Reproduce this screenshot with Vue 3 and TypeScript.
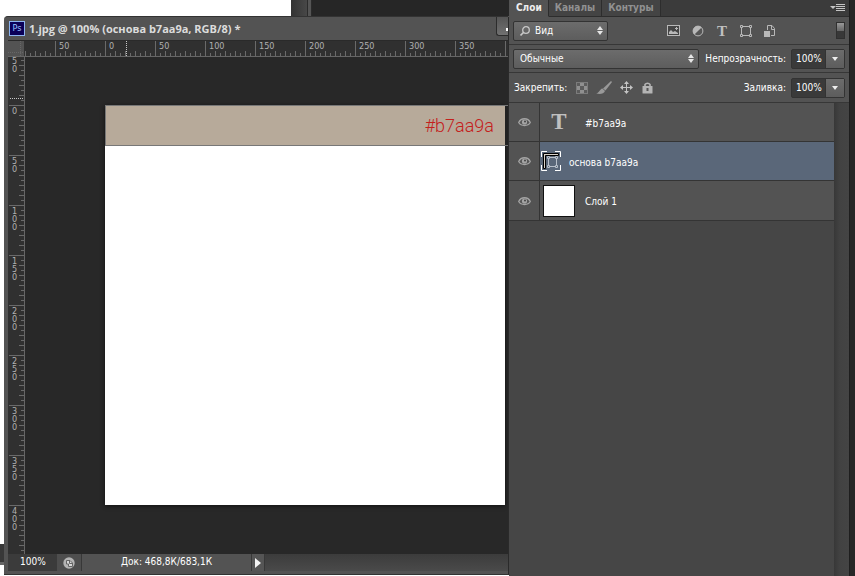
<script setup lang="ts">
import { computed, onBeforeUnmount, onMounted, ref } from 'vue'

type LayerKind = 'text' | 'shape' | 'pixel'
interface Layer {
  id: number
  name: string
  kind: LayerKind
}

const layers: Layer[] = [
  { id: 1, name: '#b7aa9a', kind: 'text' },
  { id: 2, name: 'основа b7aa9a', kind: 'shape' },
  { id: 3, name: 'Слой 1', kind: 'pixel' },
]
const tabs = ['Слои', 'Каналы', 'Контуры']

const activeTab = ref('Слои')
const selected = ref(2)
const filterKind = ref('Вид')
const blendMode = ref('Обычные')
const opacity = ref('100%')
const fill = ref('100%')

// Ruler geometry: one tick every 5px, a label every 50px
const ORIGIN_X = 97
const ORIGIN_Y = 49
const body = ref<HTMLElement | null>(null)
const width = ref(0)
const height = ref(0)
let observer: ResizeObserver | undefined

function measure(): void {
  width.value = body.value?.clientWidth ?? 0
  height.value = body.value?.clientHeight ?? 0
}
onMounted(() => {
  measure()
  observer = new ResizeObserver(measure)
  if (body.value) observer.observe(body.value)
})
onBeforeUnmount(() => observer?.disconnect())

function steps(from: number, to: number): number[] {
  return Array.from({ length: Math.max(0, to - from + 1) }, (_, i) => from + i)
}

const ticksX = computed(() =>
  steps(-16, Math.floor((width.value - ORIGIN_X) / 5)).map((n) => ({ pos: ORIGIN_X + n * 5, n })),
)
const ticksY = computed(() =>
  steps(-9, Math.floor((height.value - 16 - ORIGIN_Y) / 5)).map((n) => ({ pos: ORIGIN_Y + n * 5, n })),
)
const labelsX = computed(() =>
  steps(-1, Math.floor((width.value - ORIGIN_X - 22) / 50)).map((n) => ({
    pos: ORIGIN_X + n * 50,
    text: String(Math.abs(n * 50)),
  })),
)
const labelsY = computed(() =>
  steps(-1, Math.floor((height.value - 16 - ORIGIN_Y - 26) / 50)).map((n) => ({
    pos: ORIGIN_Y + n * 50,
    digits: String(Math.abs(n * 50)).split(''),
  })),
)

function tickLength(n: number): number {
  if (n % 10 === 0) return 15
  return n % 2 === 0 ? 5 : 3
}
</script>

<template>
  <div class="desktop">
    <section class="workspace">
      <div class="backdrop">
        <div class="back-page"></div>
        <div class="back-scroll"></div>
        <div class="back-edge"></div>
        <div class="back-dark"></div>
      </div>
      <div class="lower">
        <div class="gutter"><div class="gutter-bar"></div></div>
        <article class="window">
          <header class="titlebar">
            <span class="app-icon">Ps</span>
            <h1>1.jpg @ 100% (основа b7aa9a, RGB/8) *</h1>
            <button class="minimize" type="button" aria-label="Свернуть"><i></i></button>
          </header>

          <div ref="body" class="body">
            <div class="ruler-x">
              <svg class="ruler-svg" aria-hidden="true">
                <g class="ticks">
                  <rect v-for="t in ticksX" :key="t.n" :x="t.pos" :y="15 - tickLength(t.n)" width="1" :height="tickLength(t.n)" />
                </g>
                <g class="ruler-text">
                  <text v-for="l in labelsX" :key="l.pos" :x="l.pos + 4" y="8">{{ l.text }}</text>
                </g>
                <path class="cursor-mark" d="M118.500 0V15" />
                <rect class="corner" x="0" y="0" width="16" height="15" />
                <path class="corner-dots" d="M12.500 0V15M0 11.500H16" />
              </svg>
            </div>
            <div class="ruler-y">
              <svg class="ruler-svg" aria-hidden="true">
                <g class="ticks">
                  <rect v-for="t in ticksY" :key="t.n" :x="16 - tickLength(t.n)" :y="t.pos - 1" :width="tickLength(t.n)" height="1" />
                </g>
                <g class="ruler-text">
                  <template v-for="l in labelsY" :key="l.pos">
                    <text v-for="(d, i) in l.digits" :key="i" x="4" :y="l.pos + 8 + i * 8">{{ d }}</text>
                  </template>
                </g>
                <path class="cursor-mark" d="M2 41.500H16" />
              </svg>
            </div>
            <div class="stage">
              <div class="artboard">
                <div class="band"><span>#b7aa9a</span></div>
              </div>
            </div>
          </div>

          <footer class="status">
            <span class="zoom">100%</span>
            <button class="status-icon" type="button" aria-label="Экспорт">
              <svg width="12" height="12" viewBox="0 0 12 12">
                <circle cx="6" cy="6" r="5.700" fill="#b4b4b4" />
                <path d="M3.500 3.500H7L9.500 6V9.500H5.500V7H3.500Z" fill="#d8d8d8" stroke="#666" />
                <path d="M6.500 3.500V6.500H9.500" fill="none" stroke="#666" />
              </svg>
            </button>
            <span class="doc-size">Док: 468,8К/683,1К</span>
            <button class="status-more" type="button" aria-label="Подробнее">
              <svg width="6" height="10" viewBox="0 0 6 10"><path d="M0 0L6 5L0 10Z" fill="#f2f2f2" /></svg>
            </button>
            <span class="status-rest"></span>
          </footer>
        </article>
      </div>
    </section>

    <aside class="panel">
      <nav class="tabs">
        <button v-for="t in tabs" :key="t" type="button" :class="{ active: t === activeTab }" @click="activeTab = t">{{ t }}</button>
        <button class="panel-menu" type="button" aria-label="Меню панели">
          <svg width="15" height="8" viewBox="0 0 15 8">
            <path d="M0 2H6L3 5Z" fill="#c4c4c4" />
            <path d="M6 .500H15M6 2.500H15M6 4.500H15M6 6.500H15" stroke="#c4c4c4" />
          </svg>
        </button>
      </nav>

      <div class="row filter-row">
        <label class="picker kind">
          <svg class="lens" width="10" height="10" viewBox="0 0 10 10">
            <circle cx="6" cy="4" r="3.300" fill="none" stroke="#c8c8c8" stroke-width="1.300" />
            <path d="M3.700 6.300L.500 9.500" stroke="#c8c8c8" stroke-width="1.600" />
          </svg>
          <select v-model="filterKind" aria-label="Фильтр слоёв"><option>Вид</option></select>
          <svg class="arrows" width="6" height="9" viewBox="0 0 6 9"><path d="M0 4L3 0L6 4ZM0 5H6L3 9Z" fill="#e6e6e6" /></svg>
        </label>
        <div class="filters">
          <button type="button" aria-label="Пиксельные слои">
            <svg width="13" height="12" viewBox="0 0 13 12">
              <rect x=".500" y=".500" width="12" height="10" fill="#454545" stroke="#b8b8b8" />
              <path d="M2 9V7L4 5L6 7L8 6L11 8V9Z" fill="#b8b8b8" />
              <path d="M9.500 2V5M8 3.500H11" stroke="#b8b8b8" />
            </svg>
          </button>
          <button type="button" aria-label="Корректирующие слои">
            <svg width="12" height="12" viewBox="0 0 12 12">
              <circle cx="6" cy="6" r="4.900" fill="#555" stroke="#b8b8b8" />
              <path d="M9.600 2.400A5 5 0 1 0 2.400 9.600Z" fill="#b8b8b8" />
            </svg>
          </button>
          <button class="tool-t" type="button" aria-label="Текстовые слои">T</button>
          <button type="button" aria-label="Слои-фигуры">
            <svg width="12" height="12" viewBox="0 0 12 12" fill="none" stroke="#b8b8b8">
              <path d="M3 1.500H9M3 10.500H9M1.500 3V9M10.500 3V9" />
              <path d="M.500 .500H2.500V2.500H.500ZM9.500 .500H11.500V2.500H9.500ZM.500 9.500H2.500V11.500H.500ZM9.500 9.500H11.500V11.500H9.500Z" />
            </svg>
          </button>
          <button type="button" aria-label="Смарт-объекты">
            <svg width="12" height="12" viewBox="0 0 12 12">
              <path d="M3.500 5V.500H8L10.500 3.500V10.500H7" fill="none" stroke="#b8b8b8" />
              <path d="M7.500 .500V4.500H10.500" fill="none" stroke="#b8b8b8" />
              <rect x="0" y="6" width="6" height="6" fill="#b8b8b8" />
            </svg>
          </button>
        </div>
        <button class="toggle" type="button" aria-label="Включить фильтр"><i></i></button>
      </div>

      <div class="row blend-row">
        <label class="picker mode">
          <select v-model="blendMode" aria-label="Режим наложения"><option>Обычные</option></select>
          <svg class="arrows" width="6" height="9" viewBox="0 0 6 9"><path d="M0 4L3 0L6 4ZM0 5H6L3 9Z" fill="#e6e6e6" /></svg>
        </label>
        <label for="opacity">Непрозрачность:</label>
        <div class="combo">
          <input id="opacity" v-model="opacity" type="text" />
          <button type="button" aria-label="Изменить непрозрачность">
            <svg width="6" height="4" viewBox="0 0 6 4"><path d="M0 0H6L3 4Z" fill="#eee" /></svg>
          </button>
        </div>
      </div>

      <div class="row lock-row">
        <span class="lock-label">Закрепить:</span>
        <div class="locks">
          <button type="button" aria-label="Закрепить прозрачность">
            <svg width="12" height="12" viewBox="0 0 12 12">
              <rect x=".500" y=".500" width="11" height="11" fill="#5c5c5c" stroke="#7c7c7c" />
              <path d="M4 1H8V4H4ZM1 4H4V8H1ZM8 4H11V8H8ZM4 8H8V11H4Z" fill="#909090" />
            </svg>
          </button>
          <button type="button" aria-label="Закрепить пикселы">
            <svg width="16" height="14" viewBox="0 0 16 14">
              <path d="M15 0L16 1L9.500 9.500L7 7.500Z" fill="#999" />
              <path d="M6.500 7.500L9 10C8 13 4 13.500 0 12.500C3.500 12 3.500 8 6.500 7.500Z" fill="#999" />
            </svg>
          </button>
          <button type="button" aria-label="Закрепить положение">
            <svg width="13" height="13" viewBox="0 0 13 13">
              <path d="M6.500 2V11M2 6.500H11" stroke="#c4c4c4" />
              <path d="M6.500 0L9 3H4ZM6.500 13L4 10H9ZM0 6.500L3 4V9ZM13 6.500L10 9V4Z" fill="#c4c4c4" />
            </svg>
          </button>
          <button type="button" aria-label="Закрепить всё">
            <svg width="12" height="13" viewBox="0 0 12 13">
              <path d="M4 6V3.500A3 2.700 0 0 1 9 3.500V6" fill="none" stroke="#b4b4b4" stroke-width="1.600" />
              <rect x="1.500" y="5" width="10" height="7.500" rx=".500" fill="#b4b4b4" />
              <rect x="5.500" y="7" width="2" height="3" fill="#555" />
            </svg>
          </button>
        </div>
        <label for="fill">Заливка:</label>
        <div class="combo">
          <input id="fill" v-model="fill" type="text" />
          <button type="button" aria-label="Изменить заливку">
            <svg width="6" height="4" viewBox="0 0 6 4"><path d="M0 0H6L3 4Z" fill="#eee" /></svg>
          </button>
        </div>
      </div>

      <div class="layer-area">
        <ul class="layers">
          <li v-for="l in layers" :key="l.id" :class="[l.kind, { selected: l.id === selected }]" @click="selected = l.id">
            <button class="eye" type="button" aria-label="Видимость слоя">
              <svg width="13" height="10" viewBox="0 0 13 10">
                <path d="M.700 5.500C3 .500 10 .500 12.300 5.500C10 9.500 3 9.500 .700 5.500Z" fill="#555" stroke="#a4a4a4" stroke-width="1.300" />
                <circle cx="6.500" cy="5" r="2.600" fill="#a4a4a4" />
                <circle cx="7" cy="4.500" r="1" fill="#444" />
              </svg>
            </button>
            <div class="layer-main">
              <span v-if="l.kind === 'text'" class="layer-t">T</span>
              <svg v-else-if="l.kind === 'shape'" width="20" height="20" viewBox="0 0 20 20">
                <path d="M2.500 2.500H17.500V4.500H4.500V17.500H2.500Z" fill="#d8d2ca" stroke="#000" />
                <path d="M8 6.500H15M8 15.500H15M7.500 8V14M15.500 8V14" fill="none" stroke="#b9c0ca" />
                <path d="M6.500 5.500H8.500V7.500H6.500ZM14.500 5.500H16.500V7.500H14.500ZM6.500 14.500H8.500V16.500H6.500ZM14.500 14.500H16.500V16.500H14.500Z" fill="#5a6779" stroke="#b9c0ca" />
                <path d="M.500 6V.500H6M14 .500H19.500V6M19.500 14V19.500H14M6 19.500H.500V14" fill="none" stroke="#fff" />
              </svg>
              <span v-else class="thumb"></span>
              <span class="layer-name">{{ l.name }}</span>
            </div>
          </li>
        </ul>
        <div class="scrollbar"></div>
      </div>
    </aside>
    <div class="edge"></div>
  </div>
</template>

<style>
body {
  background: #fff;
}
</style>

<style scoped>
* {
  box-sizing: border-box;
}
.desktop {
  display: grid;
  grid-template-columns: minmax(0, 1fr) 340px 6px;
  height: 100vh;
  overflow: hidden;
  font-family: "DejaVu Sans Condensed", "DejaVu Sans", "Noto Sans", sans-serif;
  font-size: 10px;
  line-height: 14px;
  color: #fff;
}
button {
  padding: 0;
  border: 0;
  background: none;
  font: inherit;
  color: inherit;
}
svg {
  display: block;
}

/* Document side */
.workspace {
  display: flex;
  flex-direction: column;
  min-width: 0;
}
.backdrop {
  display: flex;
  height: 16px;
}
.back-page {
  width: 291px;
}
.back-scroll {
  width: 16px;
  background: linear-gradient(90deg, #333, #484848);
}
.back-edge {
  width: 5px;
  border: solid #2b2b2b;
  border-width: 0 1px;
  background: #555;
}
.back-dark {
  flex: 1;
  background: #262626;
}
.lower {
  display: flex;
  flex: 1;
  min-height: 0;
}
.gutter {
  display: flex;
  align-items: flex-end;
  width: 4px;
  padding-bottom: 11px;
}
.gutter-bar {
  width: 4px;
  height: 21px;
  border-bottom: 3px solid #666;
  background: #383838;
}
.window {
  display: flex;
  flex: 1;
  flex-direction: column;
  min-width: 0;
  margin-bottom: 1px;
  padding: 0 0 3px 4px;
  border-top: 1px solid #333;
  border-right: 1px solid #2a2a2a;
  border-bottom: 1px solid #333;
  border-top-left-radius: 4px;
  background: #535353;
}
.titlebar {
  display: flex;
  align-items: center;
  gap: 4px;
  height: 24px;
  padding-left: 1px;
  border-bottom: 1px solid #2a2a2a;
}
.app-icon {
  width: 16px;
  height: 15px;
  border: 1px solid #8cb4f0;
  background: #0a0058;
  color: #9cc4ff;
  font-size: 9px;
  line-height: 13px;
  text-align: center;
}
h1 {
  flex: 1;
  margin: 0;
  overflow: hidden;
  font-family: "Open Sans", "Noto Sans", sans-serif;
  font-size: 11px;
  line-height: 16px;
  white-space: nowrap;
  color: #dcdcdc;
}
.minimize {
  display: flex;
  align-items: center;
  justify-content: flex-end;
  align-self: flex-start;
  width: 12px;
  height: 19px;
  border: solid #2c2c2c;
  border-width: 0 0 1px 1px;
  border-bottom-left-radius: 3px;
  background: linear-gradient(#555, #707070);
}
.minimize i {
  width: 2px;
  height: 3px;
  margin-top: 6px;
  background: #fff;
}
.body {
  display: grid;
  flex: 1;
  grid-template-columns: 17px minmax(0, 1fr);
  grid-template-rows: 16px minmax(0, 1fr);
  min-height: 0;
  background: #282828;
}
.ruler-x {
  grid-column: 1 / 3;
  overflow: hidden;
  border-bottom: 1px solid #666;
  background: #303030;
}
.ruler-y {
  overflow: hidden;
  border-right: 1px solid #666;
  background: #303030;
}
.ruler-svg {
  width: 100%;
  height: 100%;
}
.ticks {
  fill: #6a6a6a;
}
.ruler-text {
  fill: #b0b0b0;
  font-size: 9px;
}
.cursor-mark {
  stroke: #c8c8c8;
  stroke-dasharray: 1 1;
}
.corner {
  fill: #535353;
}
.corner-dots {
  stroke: #666;
  stroke-dasharray: 1 1;
}
.stage {
  min-width: 0;
  overflow: hidden;
  padding: 48px 0 49px 80px;
}
.artboard {
  height: 100%;
  margin-right: 3px;
  background: #fff;
  box-shadow: 0 1px 4px #111;
}
.band {
  display: flex;
  align-items: center;
  justify-content: flex-end;
  height: 41px;
  margin-right: -3px;
  padding-right: 14px;
  border: solid #777;
  border-width: 1px 0 1px 1px;
  background: linear-gradient(90deg, transparent calc(100% - 3px), #222 0), #b7aa9a;
  color: #c4201c;
  font-family: Roboto, "Liberation Sans", sans-serif;
  font-size: 18px;
  font-weight: 300;
  line-height: 24px;
}
.status {
  display: flex;
  height: 17px;
  background: #454545;
  line-height: 16px;
}
.zoom {
  width: 49px;
  padding-left: 12px;
  background: #3b3b3b;
}
.status-icon {
  display: grid;
  place-items: center;
  width: 24px;
  background: #4e4e4e;
}
.doc-size {
  width: 171px;
  border: solid #383838;
  border-width: 0 1px;
  background: #535353;
  text-align: center;
}
.status-more {
  display: grid;
  place-items: center;
  width: 12px;
  background: #555;
}
.status-rest {
  flex: 1;
  border-left: 1px solid #383838;
  background: linear-gradient(#3c3c3c, #4a4a4a);
}

/* Layers panel */
.panel {
  display: flex;
  flex-direction: column;
  background: #535353;
}
.tabs {
  display: flex;
  height: 17px;
  background: #3b3b3b;
}
.tabs button {
  padding: 0 6px;
  border: solid #2d2d2d;
  border-width: 0 1px 1px 0;
  background: #444;
  color: #919191;
  font-weight: bold;
}
.tabs .active {
  padding-left: 7px;
  border-bottom-color: #535353;
  background: #535353;
  color: #eee;
}
.tabs .panel-menu {
  display: flex;
  flex: 1;
  align-items: center;
  justify-content: flex-end;
  padding: 0 4px 0 0;
  border-right: 0;
  background: #3b3b3b;
}
.row {
  display: flex;
  align-items: center;
  height: 28px;
  padding: 0 4px;
  border-bottom: 1px solid #373737;
}
.picker {
  display: flex;
  align-items: center;
  height: 20px;
  padding: 0 4px 0 6px;
  border: 1px solid #333;
  border-radius: 2px;
  background: linear-gradient(#6c6c6c, #5d5d5d);
}
.kind {
  width: 95px;
}
.mode {
  flex: 1;
  margin-right: 6px;
}
select {
  flex: 1;
  min-width: 0;
  padding: 0;
  border: 0;
  outline: 0;
  appearance: none;
  background: none;
  color: #fff;
  font: inherit;
}
.lens {
  margin-right: 5px;
}
.filters {
  display: flex;
  flex: 1;
  align-items: center;
  justify-content: flex-end;
  gap: 12px;
  margin-right: 60px;
}
.tool-t,
.layer-t {
  color: #c0c0c0;
  font-family: "Liberation Serif", serif;
  font-weight: bold;
  text-align: center;
}
.tool-t {
  width: 12px;
  font-size: 15px;
  line-height: 18px;
}
.layer-t {
  width: 18px;
  font-size: 23px;
  line-height: 28px;
}
.toggle {
  display: flex;
  align-items: flex-start;
  width: 9px;
  height: 17px;
  border: 1px solid #303030;
  background: #383838;
}
.toggle i {
  width: 7px;
  height: 8px;
  background: linear-gradient(#999, #666);
}
.combo {
  display: flex;
  width: 54px;
  height: 20px;
  margin-left: 5px;
  border: 1px solid #333;
  border-radius: 2px;
  background: #3a3a3a;
}
.combo input {
  flex: 1;
  width: 34px;
  min-width: 0;
  padding: 0 0 0 4px;
  border: 0;
  outline: 0;
  background: none;
  color: #fff;
  font: inherit;
}
.combo button {
  display: grid;
  place-items: center;
  width: 19px;
  border-left: 1px solid #333;
  background: linear-gradient(#6c6c6c, #5d5d5d);
}
.lock-row {
  height: 30px;
}
.lock-label {
  width: 63px;
  padding-left: 1px;
}
.locks {
  display: flex;
  flex: 1;
  align-items: center;
  gap: 8px;
}
.layer-area {
  display: flex;
  flex: 1;
}
.layers {
  flex: 1;
  margin: 0;
  padding: 0;
  background: #464646;
  list-style: none;
}
.layers li {
  display: flex;
  height: 39px;
  border-bottom: 1px solid #343434;
  background: #535353;
}
.layers .pixel {
  height: 40px;
}
.eye {
  display: grid;
  place-items: center;
  width: 31px;
  border-right: 1px solid #343434;
}
.layer-main {
  display: flex;
  flex: 1;
  align-items: center;
}
.selected .layer-main {
  background: #5a6779;
}
.text .layer-main {
  gap: 17px;
  padding-left: 10px;
}
.shape .layer-main {
  gap: 8px;
  padding-left: 1px;
}
.pixel .layer-main {
  gap: 10px;
  padding-left: 3px;
}
.thumb {
  width: 32px;
  height: 32px;
  border: 1px solid #111;
  background: #fff;
}
.layer-name {
  padding-top: 3px;
}
.scrollbar {
  width: 15px;
  background: linear-gradient(90deg, #383838, #424242 6px, #444);
}
.edge {
  border-left: 1px solid #1e1e1e;
  background: #272727;
}
</style>
